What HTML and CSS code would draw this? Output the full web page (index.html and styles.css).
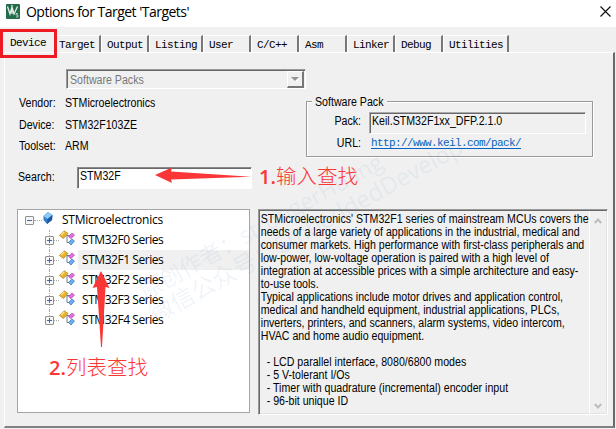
FILE: index.html
```html
<!DOCTYPE html>
<html lang="en">
<head>
<meta charset="utf-8">
<title>Options for Target 'Targets'</title>
<link rel="stylesheet" href="styles.css">
</head>
<body>
<svg class="defs" width="0" height="0" aria-hidden="true">
  <symbol id="series" viewBox="0 0 16 16">
    <path d="M7.500 5.500h3.500M8 6v6.500h3" fill="none" stroke="#6d7f96"/>
    <path d="M.5 5.500 5 .8 9 3.500 4.500 8.500z" fill="#e8b52c" stroke="#a97a17" stroke-width=".7"/>
    <path d="M2 5 5.300 1.800" stroke="#fbe48d" stroke-width="1.300"/>
    <path d="M9.500 6.500 13 3 15.500 5 12 8.800z" fill="#e56be0" stroke="#a33ba6" stroke-width=".6"/>
    <path d="M9.500 12.500 13 9 15.500 11 12 15z" fill="#69aef0" stroke="#2b63ad" stroke-width=".6"/>
  </symbol>
</svg>
<div class="window">
  <header class="titlebar">
    <svg class="logo" width="14" height="15" viewBox="0 0 14 15">
      <rect width="14" height="15" rx="1" fill="#246b4b"/>
      <path d="M1.500 2.500 4 10 6 3 8 10 11.500 2.500M6 1v9" fill="none" stroke="#e3efe8" stroke-width="1.300"/>
      <path d="M12 9.500h-2v1.500h2v2h-2" fill="none" stroke="#b8d8c6" stroke-width=".9"/>
    </svg>
    <h1>Options for Target 'Targets'</h1>
    <svg class="close" width="11" height="11" viewBox="0 0 11 11"><path d="M.5.5l10 10M10.500.5l-10 10" stroke="#111" stroke-width="1.150"/></svg>
  </header>
  <nav class="tabs">
    <span class="tab active">Device</span><span class="tab first">Target</span><span class="tab">Output</span><span class="tab wide">Listing</span><span class="tab">User</span><span class="tab">C/C++</span><span class="tab">Asm</span><span class="tab">Linker</span><span class="tab">Debug</span><span class="tab widest">Utilities</span>
  </nav>
  <main class="page">
    <section class="top">
      <div class="info">
        <div class="combo"><span class="narrow">Software Packs</span><i class="drop"><svg width="8" height="5" viewBox="0 0 8 5"><path d="M1 1h8L5 5z" fill="#fff"/><path d="M0 0h8L4 4z" fill="#929292"/></svg></i></div>
        <dl>
          <dt class="narrow">Vendor:</dt><dd class="narrow">STMicroelectronics</dd>
          <dt class="narrow">Device:</dt><dd class="narrow">STM32F103ZE</dd>
          <dt class="narrow">Toolset:</dt><dd class="narrow">ARM</dd>
        </dl>
        <div class="search"><label class="narrow">Search:</label><div class="input"><div class="narrow">STM32F</div></div></div>
      </div>
      <div class="pack">
        <div class="legend"><div class="narrow">Software Pack</div></div>
        <div class="row"><span class="key narrow">Pack:</span><div class="value"><div class="narrow">Keil.STM32F1xx_DFP.2.1.0</div></div></div>
        <div class="row url"><span class="key narrow">URL:</span><span class="link">http://www.keil.com/pack/</span></div>
      </div>
    </section>
    <section class="bottom">
      <div class="tree">
        <div class="root"><i class="box"></i><i class="dots"></i><svg width="10" height="12" viewBox="0 0 10 12"><path d="M5 0 9.500 3 9 8 4 12 .5 8 .5 4z" fill="#337fc5"/><path d="M5 0 9.500 3 4.500 7 .5 4z" fill="#8fc9f5"/><path d="M4.500 7 9.500 3 9 8 4 12z" fill="#1b59a1"/></svg><span>STMicroelectronics</span></div>
        <div class="node"><i class="box plus"></i><i class="dots"></i><svg width="16" height="16"><use href="#series"/></svg><span>STM32F0 Series</span></div>
        <div class="node selected"><i class="box plus"></i><i class="dots"></i><svg width="16" height="16"><use href="#series"/></svg><span>STM32F1 Series</span></div>
        <div class="node"><i class="box plus"></i><i class="dots"></i><svg width="16" height="16"><use href="#series"/></svg><span>STM32F2 Series</span></div>
        <div class="node"><i class="box plus"></i><i class="dots"></i><svg width="16" height="16"><use href="#series"/></svg><span>STM32F3 Series</span></div>
        <div class="node last"><i class="box plus"></i><i class="dots"></i><svg width="16" height="16"><use href="#series"/></svg><span>STM32F4 Series</span></div>
      </div>
      <div class="description">
        <div class="copy narrow"><p>STMicroelectronics' STM32F1 series of mainstream MCUs covers the</p><p>needs of a large variety of applications in the industrial, medical and</p><p>consumer markets. High performance with first-class peripherals and</p><p>low-power, low-voltage operation is paired with a high level of</p><p>integration at accessible prices with a simple architecture and easy-</p><p>to-use tools.</p><p>Typical applications include motor drives and application control,</p><p>medical and handheld equipment, industrial applications, PLCs,</p><p>inverters, printers, and scanners, alarm systems, video intercom,</p><p>HVAC and home audio equipment.</p><p>&nbsp;</p><p>  - LCD parallel interface, 8080/6800 modes</p><p>  - 5 V-tolerant I/Os</p><p>  - Timer with quadrature (incremental) encoder input</p><p>  - 96-bit unique ID</p></div>
        <div class="scroll"><svg width="8" height="6" viewBox="0 0 8 6"><path d="M.8 5 4 1.500 7.200 5" fill="none" stroke="#bdbdbd" stroke-width="2"/></svg><svg width="8" height="6" viewBox="0 0 8 6"><path d="M.8 1 4 4.500 7.200 1" fill="none" stroke="#bdbdbd" stroke-width="2"/></svg></div>
      </div>
    </section>
  </main>
  <div class="watermark author">原创作者：strongerHuang</div>
  <div class="watermark account">微信公众号：EmbeddedDevelop</div>
  <div class="highlight"></div>
  <svg class="arrows" width="616" height="429"><path d="M155 175 172 167.500 171 171.500 251 176.700 171 179.500 172 183z"/><path d="M101 271 109.500 288 105.500 287 102 347 101 347 97 287 92.500 288z"/></svg>
  <div class="note one"><b>1.</b>输入查找</div>
  <div class="note two"><b>2.</b>列表查找</div>
</div>
</body>
</html>
```
FILE: styles.css
```css
* { box-sizing: border-box; }
body { margin: 0; background: #f0f0f0; color: #000; font: 12px/16px "Liberation Sans", sans-serif; }
h1, p, dl, dd { margin: 0; }
svg { display: block; flex: none; }
.defs { position: absolute; }
.narrow { transform: scaleX(.885); transform-origin: 0 50%; white-space: nowrap; }
.window { position: relative; width: 616px; height: 429px; overflow: hidden; display: flex; flex-direction: column; }
.titlebar { height: 27px; flex: none; display: flex; background: #fff; padding: 4px 5px 0 6px; }
.titlebar h1 { font: 14px/15px "Open Sans", sans-serif; letter-spacing: -.52px; margin-left: 6px; flex: 1; white-space: nowrap; }
.close { margin-top: 2px; }
.tabs { display: flex; height: 25px; flex: none; padding: 8px 0 0 4px; font: 11px/18px "Liberation Mono", monospace; letter-spacing: -.6px; color: #000; }
.tab { width: 48px; height: 17px; padding-left: 5px; border-top: 1px solid #fff; border-left: 1px solid #fff; border-right: 2px solid #777; white-space: pre; line-height: 18px; }
.tab.active { width: 52px; border: 0; padding-left: 6px; line-height: 17px; }
.tab.first { width: 45px; padding-left: 2px; }
.tab.wide { width: 54px; }
.tab.widest { width: 66px; }
.page { width: 611px; height: 376px; margin-left: 4px; border: 1px solid #fff; border-right: 2px solid #696969; border-bottom: 2px solid #808080; }
.top { display: flex; height: 153px; }
.info { width: 301px; padding-top: 16px; }
.combo { display: flex; justify-content: space-between; width: 240px; height: 20px; margin-left: 61px; border: 1px solid #999; border-right-color: #fff; border-bottom-color: #fff; box-shadow: inset 1px 1px #696969; color: #777; line-height: 19px; padding: 1px 1px 0 3px; }
.drop { display: flex; width: 17px; height: 17px; align-items: center; justify-content: center; border: 1px solid #fff; border-right: 2px solid #777; border-bottom: 2px solid #777; }
dl { display: grid; grid-template-columns: 46px 1fr; grid-template-rows: 22px 21px 21px; padding: 5px 0 0 14px; line-height: 18px; }
.search { display: flex; padding: 9px 0 0 13px; line-height: 20px; }
.search label { width: 59px; }
.input { width: 175px; height: 22px; background: #fff; border: 1px solid #888; border-right-color: #fff; border-bottom-color: #fff; box-shadow: inset 1px 1px #696969; padding-left: 2px; line-height: 17px; }
.pack { width: 287px; height: 56px; margin-top: 48px; border: 1px solid #999; box-shadow: 1px 1px #fff, inset 1px 1px #fff; }
.legend { width: 75px; height: 16px; margin: -8px 0 0 5px; padding-left: 3px; line-height: 16px; background: #f0f0f0; }
.row { display: flex; height: 22px; margin-top: 2px; line-height: 18px; }
.row .key { width: 54px; text-align: right; transform-origin: 100% 50%; margin-right: 8px; }
.value { width: 217px; border: 1px solid #aaa; border-right-color: #fff; border-bottom-color: #fff; box-shadow: inset 1px 1px #696969; padding-left: 2px; line-height: 17px; }
.url { margin-top: -1px; line-height: 20px; }
.link { font: 11px/20px "Liberation Mono", monospace; letter-spacing: -.6px; color: #0563c1; height: 17px; text-decoration: underline; text-underline-offset: 2px; margin-left: 2px; }
.bottom { display: flex; gap: 8px; padding-left: 12px; }
.tree { width: 233px; height: 204px; margin-top: 3px; background: #fff; border: 1px solid #a5a5a5; font: 12px/20px "Open Sans", sans-serif; letter-spacing: -.25px; }
.root, .node { display: flex; height: 20px; align-items: center; white-space: nowrap; }
.root { padding-left: 7px; }
.node { padding-left: 27px; position: relative; letter-spacing: -.45px; }
.node::before { content: ""; position: absolute; z-index: 0; left: 31px; top: 0; height: 20px; border-left: 1px dotted #aaa; }
.node.last::before { height: 10px; }
.box { position: relative; z-index: 1; width: 9px; height: 9px; flex: none; border: 1px solid #919191; border-radius: 1px; background: linear-gradient(#4b63a7, #4b63a7) center / 5px 1px no-repeat, #f6f6f6; }
.box.plus { background: linear-gradient(#4b63a7, #4b63a7) center / 5px 1px no-repeat, linear-gradient(#4b63a7, #4b63a7) center / 1px 5px no-repeat, #f6f6f6; }
.dots { width: 8px; border-top: 1px dotted #aaa; margin-right: 1px; }
.node .dots { width: 5px; margin-right: 0; }
.node svg { margin-top: -4px; }
.root svg { margin-top: -4px; }
.root span { margin-left: 9px; }
.node span { padding-left: 4px; margin-left: 3px; }
.node.selected span { flex: 1; background: #f0f0f0; }
.description { display: flex; width: 350px; height: 206px; margin-top: 3px; border: 1px solid #999; border-right-color: #fff; border-bottom-color: #fff; box-shadow: inset 1px 1px #696969, inset -1px -1px #e2e2e2; }
.copy { flex: 1; min-width: 0; padding: 3px 0 0 2px; line-height: 13px; }
.copy p { height: 13px; white-space: pre; }
.scroll { display: flex; flex: none; flex-direction: column; justify-content: space-between; width: 18px; margin-top: 1px; padding: 7px 0 5px 4px; border-left: 1px solid #fff; }
.highlight { position: absolute; left: 0; top: 29px; width: 57px; height: 29px; border: 3px solid #ed1c24; }
.arrows { position: absolute; inset: 0; fill: #fa3636; }
.note { position: absolute; color: #fa3636; font: 300 20.500px/26px "Noto Sans CJK SC", sans-serif; white-space: nowrap; }
.note b { font: 600 20px/26px "Open Sans", sans-serif; }
.one { left: 259px; top: 162px; }
.two { left: 49px; top: 353px; }
.watermark { position: absolute; color: rgba(100, 145, 205, .1); font: 22px/24px "Open Sans", "Noto Sans CJK SC", sans-serif; white-space: nowrap; transform: rotate(-29deg); transform-origin: 0 50%; }
.author { left: 141px; top: 281px; font-size: 22.8px; }
.account { left: 151px; top: 304px; font-size: 23.8px; }
```
